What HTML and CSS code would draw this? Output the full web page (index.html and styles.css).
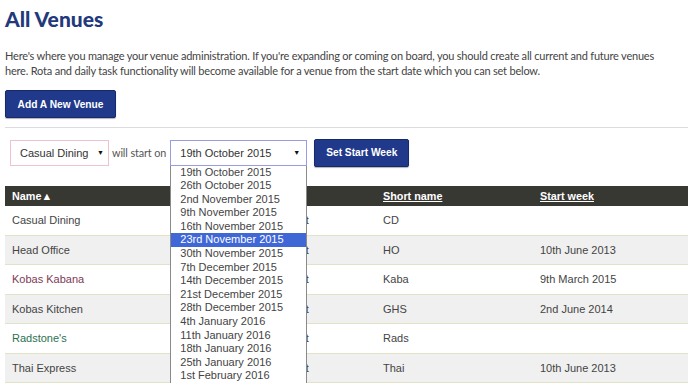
FILE: index.html
```html
<!DOCTYPE html>
<html lang="en">
<head>
    <meta charset="UTF-8">
    <title>All Venues</title>
    <link rel="stylesheet" href="styles.css">
</head>
<body>
    <h1 class="title">All Venues</h1>
    <p class="intro">Here's where you manage your venue administration. If you're expanding or coming on board, you should create all current and future venues here. Rota and daily task functionality will become available for a venue from the start date which you can set below.</p>

    <button class="btn add-btn">Add A New Venue</button>

    <hr class="divider">

    <div class="start-row">
        <div class="fake-select venue-select">
            <span>Casual Dining</span>
            <span class="arrow">&#9660;</span>
        </div>
        <span class="start-label">will start on</span>
        <div class="date-wrap">
            <div class="fake-select date-select">
                <span>19th October 2015</span>
                <span class="arrow">&#9660;</span>
            </div>
            <ul class="date-list">
                <li>19th October 2015</li>
                <li>26th October 2015</li>
                <li>2nd November 2015</li>
                <li>9th November 2015</li>
                <li>16th November 2015</li>
                <li class="selected">23rd November 2015</li>
                <li>30th November 2015</li>
                <li>7th December 2015</li>
                <li>14th December 2015</li>
                <li>21st December 2015</li>
                <li>28th December 2015</li>
                <li>4th January 2016</li>
                <li>11th January 2016</li>
                <li>18th January 2016</li>
                <li>25th January 2016</li>
                <li>1st February 2016</li>
            </ul>
        </div>
        <button class="btn week-btn">Set Start Week</button>
    </div>

    <table class="venues">
        <thead>
            <tr>
                <th class="col-name">Name&#9650;</th>
                <th class="col-type"></th>
                <th class="col-short"><a href="#">Short name</a></th>
                <th class="col-week"><a href="#">Start week</a></th>
            </tr>
        </thead>
        <tbody>
            <tr><td>Casual Dining</td><td>Restaurant</td><td>CD</td><td></td></tr>
            <tr><td>Head Office</td><td>Restaurant</td><td>HO</td><td>10th June 2013</td></tr>
            <tr><td class="maroon">Kobas Kabana</td><td>Restaurant</td><td>Kaba</td><td>9th March 2015</td></tr>
            <tr><td>Kobas Kitchen</td><td>Restaurant</td><td>GHS</td><td>2nd June 2014</td></tr>
            <tr><td class="green">Radstone's</td><td>Restaurant</td><td>Rads</td><td></td></tr>
            <tr><td>Thai Express</td><td>Restaurant</td><td>Thai</td><td>10th June 2013</td></tr>
        </tbody>
    </table>
</body>
</html>
```

FILE: styles.css
```css
body {
    margin: 0;
    padding: 0 0 0 5px;
    background-color: #ffffff;
    font-family: "Liberation Sans", Arial, sans-serif;
    color: #444;
    overflow: hidden;
}

.title {
    margin: 0;
    padding-top: 6px;
    font-family: "Lato", sans-serif;
    font-size: 21px;
    line-height: 26px;
    font-weight: 900;
    color: #22397c;
}

.intro {
    margin: 16px 0 0 0;
    max-width: 660px;
    font-family: "Lato", sans-serif;
    font-size: 11px;
    letter-spacing: -0.2px;
    line-height: 15px;
    color: #444;
}

.btn {
    background-color: #20398a;
    border: 1px solid #17296a;
    border-radius: 2px;
    color: #fff;
    font-family: "Liberation Sans", Arial, sans-serif;
    font-weight: 700;
    font-size: 10.2px;
    cursor: pointer;
    box-shadow: 0 1px 1px rgba(0, 0, 0, 0.3);
}

.add-btn {
    display: block;
    margin-top: 12px;
    width: 111px;
    height: 28px;
    padding: 0;
}

.divider {
    margin: 9px 0 0 0;
    border: none;
    border-top: 1px solid #dcdcdc;
}

.start-row {
    display: flex;
    align-items: center;
    margin-top: 11px;
    margin-left: 5px;
    height: 27px;
}

.fake-select {
    display: flex;
    align-items: center;
    justify-content: space-between;
    box-sizing: border-box;
    height: 26px;
    background-color: #fff;
    font-size: 11px;
    color: #333;
}

.fake-select .arrow {
    font-size: 7px;
    color: #111;
}

.venue-select {
    width: 99px;
    padding: 0 4px 0 9px;
    border: 1px solid #efc2d0;
}

.start-label {
    margin: 0 4px 0 3px;
    font-family: "Lato", sans-serif;
    font-size: 10.8px;
    letter-spacing: -0.1px;
    color: #555;
}

.date-wrap {
    position: relative;
    width: 137px;
}

.date-select {
    width: 137px;
    padding: 0 6px 0 9px;
    border: 1px solid #9b9be3;
}

.date-list {
    position: absolute;
    top: 26px;
    left: 0;
    z-index: 2;
    width: 137px;
    box-sizing: border-box;
    margin: 0;
    padding: 0 0 1px 0;
    list-style: none;
    background-color: #fff;
    border: 1px solid #8a8a8a;
    border-top: none;
}

.date-list li {
    height: 13.6px;
    line-height: 13.6px;
    padding-left: 9px;
    font-size: 11px;
    color: #444;
}

.date-list li.selected {
    background-color: #3f68d6;
    color: #fff;
}

.week-btn {
    margin-left: 7px;
    width: 95px;
    height: 28px;
    padding: 0;
}

.venues {
    margin-top: 20px;
    width: 683px;
    border-collapse: collapse;
    table-layout: fixed;
    font-size: 11px;
}

.venues th {
    height: 20px;
    padding: 0 0 0 7px;
    background-color: #383833;
    color: #fff;
    text-align: left;
    font-weight: 700;
    font-size: 10.8px;
}

.venues th a {
    color: #fff;
}

.col-name { width: 236px; }
.col-type { width: 121px; }
.col-short { width: 150px; }

.venues td {
    height: 28.5px;
    padding: 0 0 0 7px;
    border-bottom: 1px solid #e2e2c6;
    color: #444;
}

.venues tbody tr:nth-child(even) td {
    background-color: #f0f0f0;
}

.venues td.maroon {
    color: #7d3a55;
}

.venues td.green {
    color: #2b7152;
}
```
